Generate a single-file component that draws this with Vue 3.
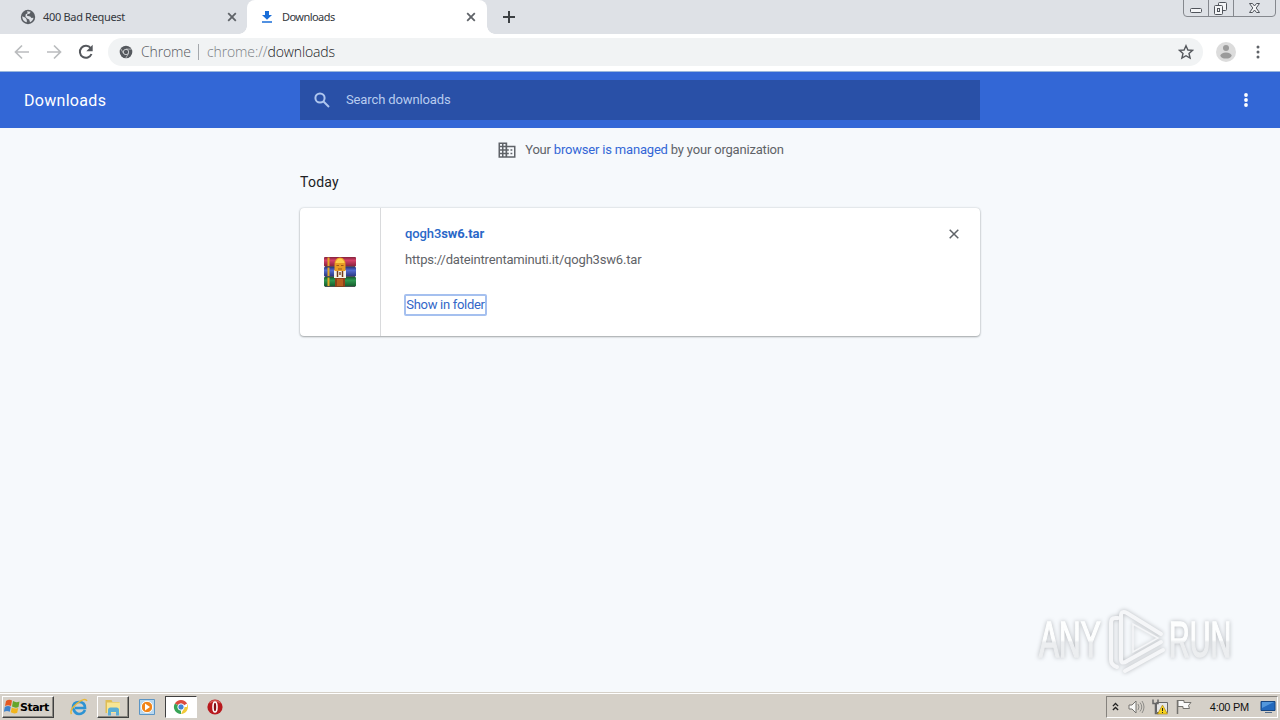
<template>
  <div class="screen">
    <div class="tab-strip">
      <div class="tab">
        <svg class="favicon" viewBox="0 0 16 16">
          <circle cx="8" cy="8" r="7.2" fill="#5a5e64" />
          <path d="M2.3 7.2 5.5 8.8 6.8 11v2.3C4 12.7 2 10 2.3 7.2zM7 2.2l3.6.5-.8 1.8-2.5.8-.4 1.5 3.3.6 1.3 1.7 2-.4c-.3 2-1.7 3.7-3.5 4.5l-.8-2.7-2.2-1-1.6-2 .3-2.3 2-1z" fill="#dee1e6" />
        </svg>
        <span class="tab-title">400 Bad Request</span>
        <svg class="tab-close" viewBox="0 0 10 10"><path d="M1.2 1.2l7.6 7.6M8.8 1.2 1.2 8.8" /></svg>
      </div>
      <div class="tab active">
        <svg class="favicon" viewBox="0 0 16 16">
          <path d="M6 2h4v4h3L8 10.8 3 6h3zM3 12.2h10v1.5H3z" fill="#1a6ed8" />
        </svg>
        <span class="tab-title downloads-title">Downloads</span>
        <svg class="tab-close" viewBox="0 0 10 10"><path d="M1.2 1.2l7.6 7.6M8.8 1.2 1.2 8.8" /></svg>
      </div>
      <svg class="new-tab" viewBox="0 0 12 12"><path d="M6 0v12M0 6h12" /></svg>
      <svg class="window-buttons" viewBox="0 0 94 17">
        <path d="M.5 0v13q0 3.5 3.5 3.500h85q3.5 0 3.5-3.500V0M25.5 0v16M50.5 0v16" fill="none" stroke="#85888e" />
        <g fill="#f4f5f7" stroke="#50545b">
          <rect x="7.5" y="8.5" width="11" height="4" rx="1" />
          <rect x="35.5" y="2.5" width="8" height="8" rx="1" />
          <rect x="31.5" y="5.5" width="8" height="9" rx="1" />
          <rect x="34.5" y="8.5" width="2" height="3" />
          <path d="M66.5 3.5h3l2 2.5 2-2.5h3l-3.3 4.5 3.3 4.5h-3l-2-2.5-2 2.5h-3L69.8 8z" />
        </g>
      </svg>
    </div>

    <div class="toolbar">
      <svg class="nav-icon muted" viewBox="0 0 16 16"><path d="M15 8H2M8 1.5 1.500 8 8 14.5" /></svg>
      <svg class="nav-icon muted" viewBox="0 0 16 16"><path d="M1 8h13M8 1.5 14.5 8 8 14.5" /></svg>
      <svg class="nav-icon" viewBox="0 0 16 16">
        <path d="M13.5 10A6 6 0 1 1 12.7 4.2" />
        <path d="M14.7.8v6.4H8.3z" class="solid" />
      </svg>
      <div class="omnibox">
        <svg class="site-icon" viewBox="0 0 14 14">
          <circle cx="7" cy="7" r="6.3" fill="#55595e" />
          <circle cx="7" cy="7" r="2.7" fill="#55595e" stroke="#d5d7d9" stroke-width=".9" />
          <path d="M7 4.1h5.600M4.5 8.500 1.8 3.8M9.500 8.500l-2.8 4.8" stroke="#d5d7d9" stroke-width=".7" />
        </svg>
        <span class="site-name">Chrome</span>
        <span class="divider"></span>
        <span class="url"><span class="scheme">chrome://</span>downloads</span>
        <svg class="star" viewBox="0 0 16 16"><path d="M8 1.7 9.9 6l4.7.4-3.6 3.1 1.1 4.6L8 11.7l-4.1 2.4L5 9.5 1.4 6.4 6.1 6z" /></svg>
      </div>
      <svg class="avatar" viewBox="0 0 20 20">
        <circle cx="10" cy="10" r="10" fill="#dcdcdc" />
        <circle cx="10" cy="6" r="3" fill="#9b9b9b" />
        <ellipse cx="10" cy="13.6" rx="5.6" ry="3" fill="#9b9b9b" />
      </svg>
      <svg class="dots" viewBox="0 0 4 16"><circle v-for="y in [3, 8, 13]" :key="y" cx="2" :cy="y" r="1.5" /></svg>
    </div>

    <header class="page-header">
      <h1>Downloads</h1>
      <div class="search">
        <svg viewBox="0 0 16 16"><circle cx="6" cy="6" r="4.6" /><path d="m9.5 9.5 5.5 5.5" /></svg>
        <span>Search downloads</span>
      </div>
      <svg class="dots page-menu" viewBox="0 0 4 16"><circle v-for="y in [3, 8, 13]" :key="y" cx="2" :cy="y" r="1.9" /></svg>
    </header>

    <main>
      <div class="managed">
        <svg viewBox="0 0 18 16">
          <path fill-rule="evenodd" d="M.5.5h8.700v3.200h8.300v12H.5zM2 2v1.700h2V2zm3.500 0v1.700h2V2zM2 5.200v2h2v-2zm3.500 0v2h2v-2zM2 8.700v2h2v-2zm3.500 0v2h2v-2zM2 12.200v2h2v-2zm3.500 0v2h2v-2zM9.200 5.200v2h1.600v1.500H9.200v2h1.600v1.500H9.200v2h6.800v-9zm3.300 2h1.800v1.500h-1.800zm0 3.500h1.800v1.500h-1.800z" />
        </svg>
        <span class="managed-text">Your <a>browser is managed</a> by your organization</span>
      </div>
      <h2>Today</h2>
      <div class="card">
        <div class="file-icon">
          <svg viewBox="0 0 32 30">
            <defs>
              <linearGradient v-for="book in books" :id="book.id" :key="book.id" x1="0" y1="0" x2="0" y2="1">
                <stop offset="0" :stop-color="book.dark" />
                <stop offset=".35" :stop-color="book.light" />
                <stop offset="1" :stop-color="book.dark" />
              </linearGradient>
            </defs>
            <g v-for="book in books" :key="book.id">
              <rect x="0" :y="book.y" width="32" height="9.6" rx="1" :fill="`url(#${book.id})`" />
              <path :d="`M1 ${book.y + 9.6}h30`" stroke="#302d38" stroke-width=".8" />
              <path :d="`M4.5 ${book.y + .5}v8.5`" stroke="#e6a928" stroke-width="2" />
            </g>
            <path d="M11 20h10v9.8H11z" fill="#8f421b" />
            <path d="M13 22h6v7h-6z" fill="#b95e20" />
            <path d="M10 13h12v8H10z" fill="#f7f3e9" />
            <path d="M10.500 8q0-7.500 5.500-7.500T21.500 8v6h-11z" fill="#e89c24" />
            <path d="M11.500 6q1-4.500 4.500-4.500T20.500 6z" fill="#ffd04a" />
            <path d="M12.500 8.500h2.500M17 8.500h2.500M14 12h4" stroke="#9c5817" />
            <path d="M13.500 14v6M18.500 14v6" stroke="#713918" stroke-width="1.500" />
            <path d="M15 15h2v3h-2z" fill="#9b7961" />
          </svg>
        </div>
        <div class="details">
          <div class="file-row">
            <a class="file-name">qogh3<b>sw6.tar</b></a>
            <svg class="remove" viewBox="0 0 10 10"><path d="m.7.7 8.6 8.6M9.3.7.7 9.3" /></svg>
          </div>
          <span class="file-url">https://dateintrentaminuti.it/qogh3sw6.tar</span>
          <button class="show">Show in folder</button>
        </div>
      </div>
    </main>

    <svg class="watermark" viewBox="0 0 210 76">
      <defs>
        <linearGradient id="fade" x1="0" y1="0" x2="0" y2="1">
          <stop offset=".5" stop-color="#fdfefe" />
          <stop offset=".54" stop-color="#eceef0" />
        </linearGradient>
      </defs>
      <text transform="translate(9 53) scale(.6 1)">ANY</text>
      <text transform="translate(139 53) scale(.575 1)">RUN</text>
      <path d="M88 14h-3q-4 0-4 5v37q0 5 6 7M91 55V12q0-6 6-3l34 21M91 55q0 6 6 2l34-19M95 67l38-21" />
      <path d="M103 20v28l25-14z" class="inner" />
    </svg>

    <footer class="taskbar">
      <button class="start">
        <svg viewBox="0 0 16 16">
          <path d="M2 2q3-2 6-.5L7 7Q4 5.500 1 7z" fill="#e45923" />
          <path d="M9 2q3 2 6.500.5L14.500 8q-3 1.500-6.500-.5z" fill="#65a52c" />
          <path d="M.8 8q3-2 6-.3l-1 5q-3-1.500-6 .2z" fill="#3f83cc" />
          <path d="M7.800 8.500q3 2 6.400.4l-1 4.800q-3 1.600-6.400-.4z" fill="#f2b51d" />
        </svg>
        <span>Start</span>
      </button>
      <div class="task-item ie">
        <svg viewBox="0 0 18 18">
          <path d="M15 12q-2 4-6 4t-6-6q0-6 6-6t6 6H5" fill="none" stroke="#2d93d3" stroke-width="2.7" />
          <path d="M1.5 16Q-1 12 7 5.500T17 3" fill="none" stroke="#e8b83a" stroke-width="1.5" />
        </svg>
      </div>
      <div class="task-item raised">
        <svg viewBox="0 0 18 18">
          <path d="M1.500 2h6l1 2h7v11h-14z" fill="#dfbd55" />
          <path d="M3 4.500h13V15H3z" fill="#f8e594" />
          <path d="M4 17.500V12q0-2.500 2.500-2.500h6q2.500 0 2.500 2.500v5.500h-3V14H7v3.500z" fill="#5baed5" />
        </svg>
      </div>
      <div class="task-item media">
        <svg viewBox="0 0 18 18">
          <path d="M1.5 1.500h15v15h-15z" fill="#b9d8ef" stroke="#5b95c5" />
          <circle cx="9" cy="9" r="5.7" fill="#f18418" stroke="#fff" />
          <path d="m7 5.500 5 3.500-5 3.500z" fill="#fff" />
        </svg>
      </div>
      <div class="task-item pressed">
        <svg viewBox="0 0 18 18">
          <path d="M9 9 2.9 5.500A7 7 0 0 1 15.100 5.500z" fill="#dc4b3e" />
          <path d="M9 9 9 16A7 7 0 0 1 2.900 5.500z" fill="#38a456" />
          <path d="M9 9h6V5.500A7 7 0 0 1 9 16L12 10z" fill="#f2ca38" />
          <circle cx="9" cy="9" r="3.2" fill="#4284d5" stroke="#fff" />
        </svg>
      </div>
      <div class="task-item opera">
        <svg viewBox="0 0 18 18">
          <circle cx="9" cy="9" r="7.6" fill="#b8191e" />
          <path d="M3.500 5q5.500-4.500 11 0" fill="none" stroke="#d65c57" stroke-width="1.500" />
          <ellipse cx="9" cy="9" rx="2" ry="5" fill="#851015" stroke="#fff" stroke-width="1.6" />
        </svg>
      </div>

      <div class="tray">
        <svg class="chevrons" viewBox="0 0 8 10"><path d="m1 4 3-3 3 3M1 8.500l3-3 3 3" /></svg>
        <svg class="tray-icon" viewBox="0 0 18 18">
          <path d="M2 7h3l4-4v12l-4-4H2z" fill="#f8f8f6" stroke="#74736f" />
          <path d="M11 6q2 3 0 6M13 4.500q3.500 4.500 0 9M15 3q4 6 0 12" fill="none" stroke="#8d8c88" />
        </svg>
        <svg class="tray-icon" viewBox="0 0 18 18">
          <path d="M5.500 4.500h11v10h-11z" fill="#e5e6e6" stroke="#666" />
          <path d="M2 1.500v4h5v-4M4.500 5.500v10h3" fill="none" stroke="#666" stroke-width="1.500" />
          <path d="m11.500 7 5 9h-10z" fill="#f6d31d" stroke="#a47b13" stroke-width=".6" />
          <path d="M11.500 10v3M11.500 14v1" stroke="#222" />
        </svg>
        <svg class="tray-icon" viewBox="0 0 18 18">
          <path d="M2.500 2v14" stroke="#74736f" stroke-width="1.500" />
          <path d="M3 2.500h6v2h7l-2.500 3 1 3H8v-2H3z" fill="#fafafa" stroke="#74736f" />
        </svg>
        <span class="clock">4:00 PM</span>
        <svg class="desktop" viewBox="0 0 16 16">
          <path d="M1 2.500h14v9H1z" fill="#2369bd" stroke="#174681" />
          <path d="M2 3h12L2 9z" fill="#5297dc" />
          <path d="M5 13.500h7" stroke="#536b89" />
        </svg>
      </div>
    </footer>
  </div>
</template>

<script setup>
const books = [
  { id: 'red', y: 0, dark: '#84203b', light: '#d64269' },
  { id: 'blue', y: 10, dark: '#28357c', light: '#536bd0' },
  { id: 'green', y: 20, dark: '#155a2c', light: '#2f9850' }
]
</script>

<style>
body {
  margin: 0;
  overflow: hidden;
}
</style>

<style scoped>
.screen {
  position: relative;
  display: flex;
  flex-direction: column;
  width: 1280px;
  height: 720px;
  overflow: hidden;
  background: #f6f9fc;
  font-family: Roboto, "Liberation Sans", sans-serif;
  font-size: 13px;
}

svg {
  display: block;
  flex: none;
}

.tab-strip {
  display: flex;
  height: 34px;
  background: #dee1e6;
}

.tab {
  display: flex;
  align-items: center;
  box-sizing: border-box;
  width: 247px;
  padding: 0 10px 0 20px;
  font-family: "Noto Sans", sans-serif;
  font-size: 11px;
  color: #34373d;
}

.tab.active {
  position: relative;
  width: 240px;
  padding: 0 11px 0 12px;
  background: #fff;
  border-radius: 8px 8px 0 0;
}

.tab.active::before,
.tab.active::after {
  content: '';
  position: absolute;
  bottom: 0;
  left: -8px;
  width: 8px;
  height: 8px;
  background: radial-gradient(circle at 0 0, transparent 7.5px, #fff 8px);
}

.tab.active::after {
  left: 240px;
  background: radial-gradient(circle at 100% 0, transparent 7.5px, #fff 8px);
}

.favicon {
  width: 16px;
  height: 16px;
  margin-right: 7px;
}

.tab-title {
  padding-bottom: 2px;
  letter-spacing: -0.32px;
}

.downloads-title {
  letter-spacing: -0.55px;
}

.tab-close {
  width: 10px;
  height: 10px;
  margin-left: auto;
  stroke: #5f6368;
  stroke-width: 1.8;
}

.new-tab {
  width: 12px;
  height: 12px;
  margin: 11px 0 0 16px;
  stroke: #3c4043;
  stroke-width: 2;
}

.window-buttons {
  width: 94px;
  height: 17px;
  margin-left: auto;
  margin-right: 3px;
}

.toolbar {
  display: flex;
  align-items: center;
  box-sizing: border-box;
  height: 38px;
  padding: 0 20px 1px 14px;
  background: #fff;
  border-bottom: 1px solid #9bb8dc;
}

.nav-icon {
  width: 16px;
  height: 16px;
  margin-right: 16px;
  fill: none;
  stroke: #55585d;
  stroke-width: 2;
}

.nav-icon.muted {
  stroke: #babcbe;
  stroke-width: 1.7;
}

.nav-icon .solid {
  fill: #55585d;
  stroke: none;
}

.omnibox {
  display: flex;
  align-items: center;
  box-sizing: border-box;
  width: 1095px;
  height: 28px;
  margin-left: -2px;
  padding: 0 9px 0 11px;
  border-radius: 14px;
  background: #f1f3f4;
  font-family: "Open Sans", sans-serif;
  font-size: 14px;
  font-weight: 300;
  color: #202124;
}

.site-icon {
  width: 14px;
  height: 14px;
  margin-right: 8px;
}

.site-name,
.url {
  padding-bottom: 1px;
}

.site-name {
  width: 50px;
  letter-spacing: -0.15px;
  color: #55585d;
}

.url {
  letter-spacing: -0.12px;
}

.divider {
  width: 1px;
  height: 16px;
  margin: 0 8px 0 7px;
  background: #a5a8ac;
}

.scheme {
  color: #7b7f84;
}

.star {
  width: 16px;
  height: 16px;
  margin-left: auto;
  fill: none;
  stroke: #55585d;
  stroke-width: 1.4;
}

.avatar {
  width: 20px;
  height: 20px;
  margin-left: 13px;
}

.dots {
  width: 4px;
  height: 16px;
  margin-left: auto;
  fill: #5f6368;
}

.page-header {
  display: grid;
  grid-template-columns: 1fr 680px 1fr;
  align-items: center;
  height: 56px;
  background: #3367d6;
  color: #fff;
}

h1 {
  margin: 0 0 0 24px;
  font-size: 16px;
  font-weight: 400;
  letter-spacing: 0.3px;
}

.search {
  display: flex;
  align-items: center;
  box-sizing: border-box;
  height: 40px;
  padding-left: 14px;
  background: #2950a7;
  color: #b8ccef;
}

.search svg {
  width: 16px;
  height: 16px;
  margin-right: 16px;
  fill: none;
  stroke: #aec6ee;
  stroke-width: 2;
}

.search span {
  padding-bottom: 2px;
  letter-spacing: -0.12px;
}

.page-menu {
  margin-right: 32px;
  fill: #fff;
}

main {
  flex: 1;
  width: 680px;
  margin: 0 auto;
}

.managed {
  display: flex;
  align-items: center;
  justify-content: center;
  height: 44px;
  padding-left: 2px;
  color: #5f6368;
}

.managed svg {
  width: 18px;
  height: 16px;
  margin-right: 9px;
  fill: #5f6368;
}

.managed-text {
  padding-bottom: 2px;
  letter-spacing: -0.19px;
}

.managed a {
  color: #3367d6;
}

h2 {
  height: 20px;
  margin: 0 0 16px;
  font-size: 14px;
  font-weight: 400;
  line-height: 20px;
  letter-spacing: 0.25px;
  color: #202124;
}

.card {
  display: flex;
  height: 128px;
  background: #fff;
  border-radius: 4px;
  box-shadow: 0 1px 2px rgba(60, 64, 67, 0.4), 0 0 2px rgba(60, 64, 67, 0.25);
}

.file-icon {
  display: flex;
  align-items: center;
  justify-content: center;
  width: 80px;
  border-right: 1px solid #d9dadc;
}

.file-icon svg {
  width: 32px;
  height: 30px;
}

.details {
  display: flex;
  flex: 1;
  flex-direction: column;
  align-items: flex-start;
  padding: 18px 21px 0 24px;
}

.file-row {
  display: flex;
  align-items: center;
  justify-content: space-between;
  width: 100%;
  height: 16px;
}

.file-name {
  padding-bottom: 2px;
  letter-spacing: -0.1px;
  color: #2a68c8;
  font-weight: 500;
}

.file-name b {
  font-weight: 700;
}

.remove {
  width: 10px;
  height: 10px;
  stroke: #5f6368;
  stroke-width: 1.5;
}

.file-url {
  margin-top: 10px;
  line-height: 16px;
  letter-spacing: -0.18px;
  color: #5f6368;
}

.show {
  width: 83px;
  height: 22px;
  margin: 26px 0 0 -1px;
  padding: 0;
  border: 2px solid #a5c0ef;
  border-radius: 2px;
  background: #fff;
  font: inherit;
  line-height: 18px;
  letter-spacing: -0.3px;
  color: #3367c8;
  white-space: nowrap;
}

.watermark {
  position: absolute;
  top: 604px;
  left: 1030px;
  width: 210px;
  height: 76px;
  fill: none;
  stroke: #f5f6f8;
  stroke-width: 4;
  stroke-linecap: round;
  filter: drop-shadow(0 0 2px #b5b8bc);
}

.watermark text {
  fill: url(#fade);
  stroke: url(#fade);
  stroke-width: 1.5;
  font-family: "Liberation Sans", sans-serif;
  font-size: 50px;
}

.watermark .inner {
  stroke-width: 1.5;
}

.taskbar {
  display: flex;
  align-items: center;
  box-sizing: border-box;
  height: 28px;
  padding: 1px 2px 0;
  background: #d5d0c8;
  border-top: 1px solid #d5d0c8;
  box-shadow: inset 0 1px #fff;
}

.start,
.raised {
  border: 1px solid;
  border-color: #fff #404040 #404040 #fff;
  box-shadow: inset -1px -1px #8b8983;
  background: #d5d0c8;
}

.start {
  display: flex;
  align-items: center;
  box-sizing: border-box;
  width: 52px;
  height: 22px;
  padding: 0 1px;
  font-family: "DejaVu Sans", sans-serif;
  font-size: 11px;
  font-weight: 700;
  letter-spacing: -0.5px;
  color: #000;
}

.start svg {
  width: 16px;
  height: 16px;
}

.task-item {
  display: flex;
  align-items: center;
  justify-content: center;
  box-sizing: border-box;
  width: 32px;
  height: 22px;
}

.task-item svg {
  width: 18px;
  height: 18px;
}

.ie {
  margin: 0 2px 0 9px;
}

.media {
  margin: 0 2px;
}

.pressed {
  border: 1px solid;
  border-color: #404040 #fff #fff #404040;
  background: #fff;
}

.opera {
  margin-left: 2px;
}

.tray {
  display: flex;
  align-items: center;
  box-sizing: border-box;
  width: 172px;
  height: 22px;
  margin-left: auto;
  padding: 0 1px 0 5px;
  border: 1px solid;
  border-color: #85827d #fff #fff #85827d;
  font-family: "Liberation Sans", sans-serif;
  font-size: 11px;
  color: #111;
}

.chevrons {
  width: 7px;
  height: 10px;
  margin-right: 8px;
  fill: none;
  stroke: #222;
  stroke-width: 1.5;
}

.tray-icon {
  width: 18px;
  height: 18px;
  margin-right: 6px;
}

.clock {
  margin-left: auto;
  margin-right: 11px;
  letter-spacing: -0.25px;
  white-space: nowrap;
}

.desktop {
  width: 16px;
  height: 16px;
}
</style>
